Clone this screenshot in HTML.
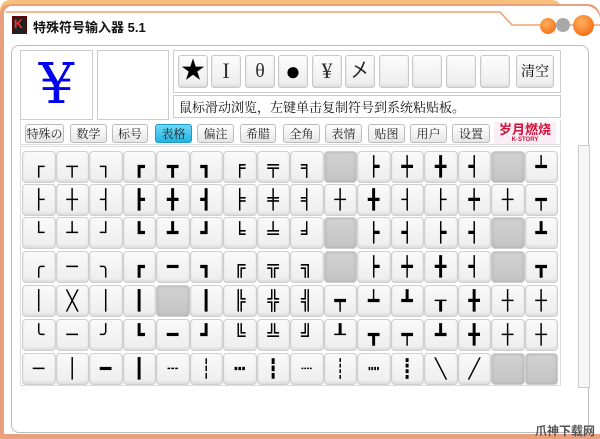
<!DOCTYPE html>
<html><head><meta charset="utf-8"><style>
*{box-sizing:border-box;margin:0;padding:0}
body{width:600px;height:439px;overflow:hidden;background:#fff;font-family:"Liberation Sans","Noto Sans CJK SC",sans-serif;position:relative}
.abs{position:absolute}
.btn{position:absolute;border:1px solid #c8c8c8;border-radius:3px;background:linear-gradient(#fdfdfd,#ececec);box-shadow:inset 0 -2px 2px #ddd}
.tab{position:absolute;top:124px;height:19px;border:1px solid #bbb;border-radius:3px;background:linear-gradient(#fff,#e6e6e6);font-size:12px;line-height:17px;text-align:center;font-family:"Noto Serif CJK SC","Noto Sans CJK SC",serif;color:#222}
.row{position:absolute;left:22px;display:flex;gap:0}
.c{width:33.5px;height:32px;margin-right:0;border:1px solid #cfcfcf;border-radius:4px;background:linear-gradient(#fafafa,#ededed);box-shadow:inset 0 -2px 2px #ddd;font-family:"DejaVu Sans Mono",monospace;font-size:19px;line-height:30px;text-align:center;color:#000;overflow:hidden}
.g{background:linear-gradient(#d2d2d2,#c4c4c4);box-shadow:inset 0 0 3px #aaa}
</style></head><body>
<div class="abs" style="left:0;top:0;width:562px;height:30px;background:#f6c07a;border-radius:10px 10px 0 0"></div>
<div class="abs" style="left:0;top:4px;width:600px;height:435px;background:#e9a07e;border-radius:10px 12px 0 0"></div>
<div class="abs" style="left:4px;top:6px;width:596px;height:428px;background:#fff;border-radius:8px 14px 0 0"></div>
<svg class="abs" style="left:0;top:0" width="600" height="45"><path d="M6 12 H500 L512 25 H600" stroke="#f0a070" stroke-width="1.5" fill="none"/></svg>
<div class="abs" style="left:12px;top:16px;width:15px;height:18px;background:#222;border:1px solid #600"></div>
<div class="abs" style="left:14px;top:17px;color:#e33;font-size:12px;font-weight:bold">K</div>
<div class="abs" style="left:33px;top:17px;font-size:13px;font-weight:bold;color:#111">特殊符号输入器 5.1</div>
<div class="abs" style="left:540px;top:18px;width:16px;height:16px;border-radius:50%;background:radial-gradient(circle at 40% 35%,#ffb060,#f06000)"></div>
<div class="abs" style="left:556px;top:18px;width:14px;height:14px;border-radius:50%;background:#a8a8a8"></div>
<div class="abs" style="left:573px;top:15px;width:21px;height:21px;border-radius:50%;background:radial-gradient(circle at 40% 35%,#ffb060,#f05a00)"></div>
<div class="abs" style="left:11px;top:45px;width:578px;height:388px;border:1px solid #bbb;border-radius:8px;background:#fff"></div>
<div class="abs" style="left:20px;top:50px;width:73px;height:70px;border:1px solid #ccc;color:#0000ee;font-family:'DejaVu Serif','Liberation Serif',serif;font-size:56px;line-height:68px;text-align:center;font-weight:normal">¥</div>
<div class="abs" style="left:97px;top:50px;width:72px;height:70px;border:1px solid #ccc"></div>
<div class="abs" style="left:173px;top:50px;width:388px;height:43px;border:1px solid #ccc"></div>
<div class="btn" style="left:178px;top:55px;width:30px;height:33px;font-size:24px;line-height:30px;text-align:center">★</div>
<div class="btn" style="left:211px;top:55px;width:30px;height:33px;font-family:'Liberation Serif',serif;font-size:22px;line-height:30px;text-align:center;color:#333">I</div>
<div class="btn" style="left:245px;top:55px;width:30px;height:33px;font-family:'Liberation Serif',serif;font-size:20px;line-height:30px;text-align:center;color:#333">θ</div>
<div class="btn" style="left:278px;top:55px;width:30px;height:33px;font-size:26px;line-height:30px;text-align:center">●</div>
<div class="btn" style="left:312px;top:55px;width:30px;height:33px;font-family:'Liberation Serif',serif;font-size:22px;line-height:30px;text-align:center;color:#333">¥</div>
<div class="btn" style="left:345px;top:55px;width:30px;height:33px;font-size:20px;line-height:30px;text-align:center;color:#222">㐅</div>
<div class="btn" style="left:379px;top:55px;width:30px;height:33px"></div>
<div class="btn" style="left:412px;top:55px;width:30px;height:33px"></div>
<div class="btn" style="left:446px;top:55px;width:30px;height:33px"></div>
<div class="btn" style="left:480px;top:55px;width:30px;height:33px"></div>
<div class="btn" style="left:516px;top:55px;width:38px;height:33px;font-size:14px;line-height:30px;text-align:center;font-family:'Noto Serif CJK SC',serif">清空</div>
<div class="abs" style="left:173px;top:95px;width:388px;height:23px;border:1px solid #ccc;font-size:13px;line-height:21px;padding-left:5px;font-family:'Noto Serif CJK SC',serif;color:#111">鼠标滑动浏览，左键单击复制符号到系统粘贴板。</div>
<div class="abs" style="left:20px;top:120px;width:541px;height:25px;border:1px solid #ddd;border-top:none"></div>
<div class="tab" style="left:25px;width:39px">特殊の</div>
<div class="tab" style="left:70px;width:37px">数学</div>
<div class="tab" style="left:112px;width:36px">标号</div>
<div class="tab" style="left:155px;width:37px;background:linear-gradient(#6fd8f6,#22b4e4);border-color:#1a9cc8">表格</div>
<div class="tab" style="left:197px;width:37px">偏注</div>
<div class="tab" style="left:240px;width:36px">希腊</div>
<div class="tab" style="left:283px;width:37px">全角</div>
<div class="tab" style="left:325px;width:37px">表情</div>
<div class="tab" style="left:368px;width:37px">贴图</div>
<div class="tab" style="left:410px;width:37px">用户</div>
<div class="tab" style="left:452px;width:38px">设置</div>
<div class="abs" style="left:494px;top:122px;width:62px;height:22px;background:#fbeef4;color:#d0103a;font-size:13px;font-weight:bold;text-align:center;line-height:16px">岁月燃烧<div style="font-size:6px;line-height:5px">K·STORY</div></div>
<div class="abs" style="left:20px;top:146px;width:541px;height:240px;border:1px solid #ddd"></div>
<div class="abs" style="left:578px;top:145px;width:12px;height:243px;border:1px solid #ccc;background:#f6f6f6"></div>
<div class="row" style="top:151px"><div class="c">┌</div><div class="c">┬</div><div class="c">┐</div><div class="c">┏</div><div class="c">┳</div><div class="c">┓</div><div class="c">╒</div><div class="c">╤</div><div class="c">╕</div><div class="c g"></div><div class="c">┝</div><div class="c">┿</div><div class="c">╋</div><div class="c">┥</div><div class="c g"></div><div class="c">┷</div></div>
<div class="row" style="top:184px"><div class="c">├</div><div class="c">┼</div><div class="c">┤</div><div class="c">┣</div><div class="c">╋</div><div class="c">┫</div><div class="c">╞</div><div class="c">╪</div><div class="c">╡</div><div class="c">┼</div><div class="c">╋</div><div class="c">┤</div><div class="c">├</div><div class="c">┿</div><div class="c">┼</div><div class="c">┯</div></div>
<div class="row" style="top:217px"><div class="c">└</div><div class="c">┴</div><div class="c">┘</div><div class="c">┗</div><div class="c">┻</div><div class="c">┛</div><div class="c">╘</div><div class="c">╧</div><div class="c">╛</div><div class="c g"></div><div class="c">┝</div><div class="c">┥</div><div class="c">┝</div><div class="c">┥</div><div class="c g"></div><div class="c">┻</div></div>
<div class="row" style="top:251px"><div class="c">╭</div><div class="c">─</div><div class="c">╮</div><div class="c">┏</div><div class="c">━</div><div class="c">┓</div><div class="c">╔</div><div class="c">╦</div><div class="c">╗</div><div class="c g"></div><div class="c">┝</div><div class="c">┿</div><div class="c">╋</div><div class="c">┥</div><div class="c g"></div><div class="c">┳</div></div>
<div class="row" style="top:285px"><div class="c">│</div><div class="c">╳</div><div class="c">│</div><div class="c">┃</div><div class="c g"></div><div class="c">┃</div><div class="c">╠</div><div class="c">╬</div><div class="c">╣</div><div class="c">┯</div><div class="c">┷</div><div class="c">┻</div><div class="c">┰</div><div class="c">╋</div><div class="c">┼</div><div class="c">┼</div></div>
<div class="row" style="top:319px"><div class="c">╰</div><div class="c">─</div><div class="c">╯</div><div class="c">┗</div><div class="c">━</div><div class="c">┛</div><div class="c">╚</div><div class="c">╩</div><div class="c">╝</div><div class="c">┸</div><div class="c">┳</div><div class="c">┯</div><div class="c">┻</div><div class="c">╋</div><div class="c">┼</div><div class="c">┼</div></div>
<div class="row" style="top:353px"><div class="c">─</div><div class="c">│</div><div class="c">━</div><div class="c">┃</div><div class="c">┄</div><div class="c">┆</div><div class="c">┅</div><div class="c">┇</div><div class="c">┈</div><div class="c">┊</div><div class="c">┉</div><div class="c">┋</div><div class="c">╲</div><div class="c">╱</div><div class="c g"></div><div class="c g"></div></div>
<div class="abs" style="left:535px;top:422px;font-size:12px;color:#555;font-weight:bold">爪神下载网</div>
</body></html>
